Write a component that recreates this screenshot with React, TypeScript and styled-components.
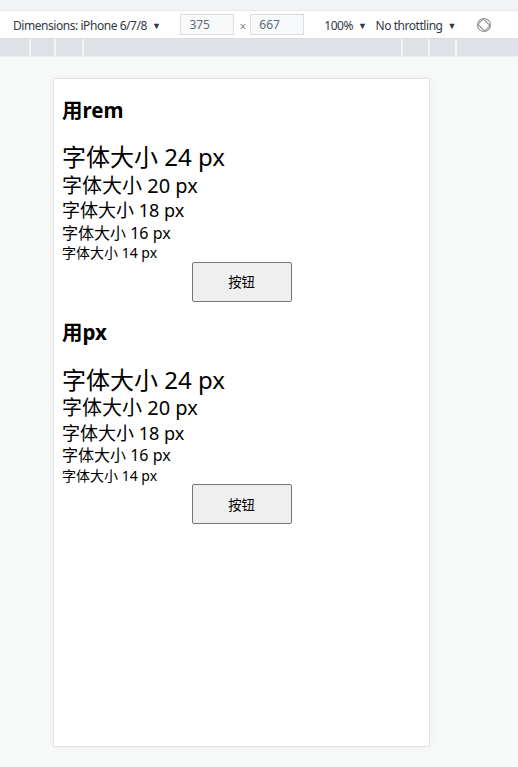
import React from "react";
import styled, { createGlobalStyle } from "styled-components";

const Global = createGlobalStyle`
  html, body { margin: 0; padding: 0; }
  body {
    width: 518px;
    height: 767px;
    overflow: hidden;
    background: #f7f8f8;
    font-family: "Noto Sans", "Noto Sans CJK SC", sans-serif;
  }
`;

const Page = styled.div`
  display: flex;
  flex-direction: column;
  width: 518px;
  height: 767px;
`;

const TopStrip = styled.div`
  height: 10px;
  background: #f1f3f4;
  border-bottom: 1px solid #e8eaed;
`;

const Toolbar = styled.div`
  height: 27px;
  background: #ffffff;
  border-bottom: 1px solid #d9dcdf;
  display: flex;
  align-items: center;
  padding-left: 13px;
  font-family: "Noto Sans", sans-serif;
  font-size: 12px;
  color: #303942;
`;

const Label = styled.span<{ $ml?: number }>`
  display: inline-flex;
  align-items: center;
  margin-left: ${(p) => p.$ml ?? 0}px;
  margin-top: 1px;
  white-space: nowrap;
  letter-spacing: -0.45px;
`;

const Caret = styled.span`
  font-size: 9px;
  margin-left: 5px;
  color: #303942;
`;

const SizeInput = styled.span<{ $ml: number }>`
  box-sizing: border-box;
  width: 54px;
  height: 21px;
  margin-left: ${(p) => p.$ml}px;
  border: 1px solid #dadce0;
  background: #f8f9fa;
  display: flex;
  align-items: center;
  padding-left: 8px;
  color: #5d6a78;
  font-size: 12px;
`;

const Times = styled.span`
  margin-left: 5px;
  margin-top: 3px;
  color: #80868b;
  font-size: 12px;
`;

const Ruler = styled.div`
  height: 17px;
  background: #dee1e6;
  border-bottom: 1px solid #eceef0;
  display: flex;
`;

const RulerSeg = styled.div<{ $w: number }>`
  width: ${(p) => p.$w}px;
  height: 100%;
  border-right: 2px solid #f4f5f6;
  box-sizing: border-box;
  flex: none;
`;

const RulerFill = styled.div`
  flex: 1;
`;

const Canvas = styled.div`
  flex: 1;
  padding: 22px 0 0 54px;
  background: #f7f8f8;
`;

const Device = styled.div`
  width: 375px;
  height: 667px;
  background: #ffffff;
  box-shadow: 0 0 0 1px #e2e3e3, 0 0 10px rgba(0, 0, 0, 0.05);
  padding: 8px;
  box-sizing: border-box;
  overflow: hidden;
  font-family: "Noto Sans", "Noto Sans CJK SC", sans-serif;
  color: #000;
  display: flow-root;
`;

const Inner = styled.div`
  margin-top: -8px;
`;

const Heading = styled.h3`
  font-size: 20.5px;
  font-weight: 700;
  line-height: 24.7px;
  margin: 18.72px 0;
`;

const Line = styled.div<{ $size: number }>`
  font-size: ${(p) => p.$size}px;
  line-height: 1.32;
`;

const Button = styled.button`
  display: block;
  margin: -1px auto 0;
  width: 100px;
  height: 40px;
  background: #efefef;
  border: 1px solid #767676;
  border-radius: 2px;
  font-family: "Noto Sans CJK SC", sans-serif;
  font-size: 13.33px;
  color: #000;
  padding: 0;
`;

const RotateIcon = () => (
  <svg width="16" height="16" viewBox="0 0 16 16" style={{ marginLeft: 20 }}>
    <g fill="none" stroke="#909599" strokeWidth="1.1">
      <circle cx="8" cy="8" r="6.5" />
      <rect x="4.2" y="3.2" width="7.6" height="9.6" rx="1" transform="rotate(-45 8 8)" />
    </g>
  </svg>
);

const sizes = [24, 20, 18, 16, 14];

const Section: React.FC<{ title: string }> = ({ title }) => (
  <>
    <Heading>{title}</Heading>
    {sizes.map((s) => (
      <Line key={s} $size={s}>
        字体大小 {s} px
      </Line>
    ))}
    <Button>按钮</Button>
  </>
);

export default function App() {
  return (
    <>
      <Global />
      <Page>
        <TopStrip />
        <Toolbar>
          <Label>
            Dimensions: iPhone 6/7/8<Caret>▼</Caret>
          </Label>
          <SizeInput $ml={20}>375</SizeInput>
          <Times>×</Times>
          <SizeInput $ml={4}>667</SizeInput>
          <Label $ml={20}>
            100%<Caret>▼</Caret>
          </Label>
          <Label $ml={9}>
            No throttling<Caret>▼</Caret>
          </Label>
          <RotateIcon />
        </Toolbar>
        <Ruler>
          <RulerSeg $w={31} />
          <RulerSeg $w={25} />
          <RulerSeg $w={28} />
          <RulerSeg $w={319} />
          <RulerSeg $w={27} />
          <RulerSeg $w={27} />
          <RulerFill />
        </Ruler>
        <Canvas>
          <Device>
            <Inner>
              <Section title="用rem" />
              <Section title="用px" />
            </Inner>
          </Device>
        </Canvas>
      </Page>
    </>
  );
}
